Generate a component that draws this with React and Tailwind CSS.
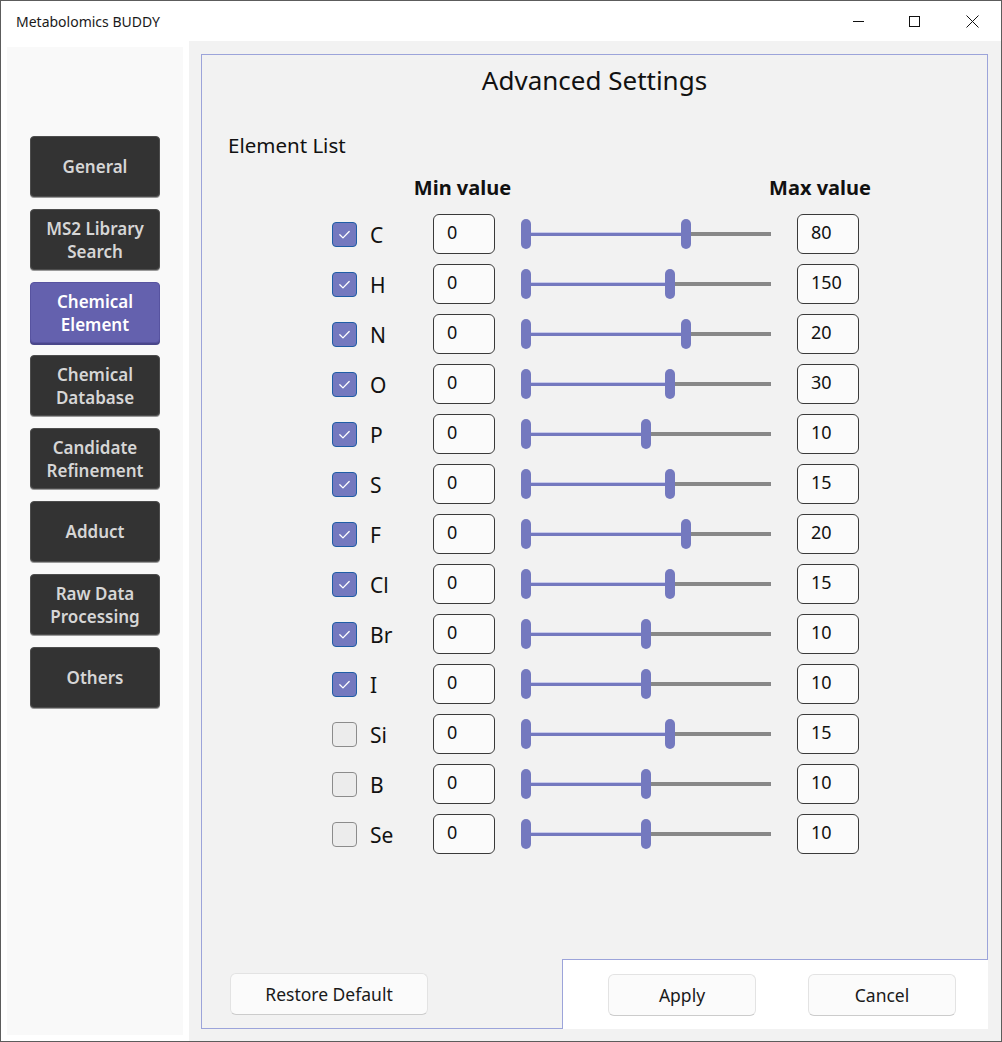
import React from 'react';

const NAV = [
  { label: ['General'] },
  { label: ['MS2 Library', 'Search'] },
  { label: ['Chemical', 'Element'], active: true },
  { label: ['Chemical', 'Database'] },
  { label: ['Candidate', 'Refinement'] },
  { label: ['Adduct'] },
  { label: ['Raw Data', 'Processing'] },
  { label: ['Others'] },
];

// pos = right thumb centre, px from track start
const ELEMENTS = [
  { sym: 'C', on: true, max: '80', pos: 165 },
  { sym: 'H', on: true, max: '150', pos: 149 },
  { sym: 'N', on: true, max: '20', pos: 165 },
  { sym: 'O', on: true, max: '30', pos: 149 },
  { sym: 'P', on: true, max: '10', pos: 125 },
  { sym: 'S', on: true, max: '15', pos: 149 },
  { sym: 'F', on: true, max: '20', pos: 165 },
  { sym: 'Cl', on: true, max: '15', pos: 149 },
  { sym: 'Br', on: true, max: '10', pos: 125 },
  { sym: 'I', on: true, max: '10', pos: 125 },
  { sym: 'Si', on: false, max: '15', pos: 149 },
  { sym: 'B', on: false, max: '10', pos: 125 },
  { sym: 'Se', on: false, max: '10', pos: 125 },
];

const NavButton = ({ label, active }) => (
  <div
    className={`w-[130px] h-[61px] rounded-[4px] flex flex-col items-center justify-center text-[17px] font-semibold leading-[23px] ${
      active
        ? 'bg-[#6461ae] text-white border border-[#5753a0] shadow-[0_2px_0_#4a478a]'
        : 'bg-[#333333] text-[#d6d6d6] border border-[#4d4d4d] shadow-[0_1px_0_#9a9a9a]'
    }`}
  >
    {label.map((l) => (
      <span key={l}>{l}</span>
    ))}
  </div>
);

const Checkbox = ({ on }) =>
  on ? (
    <div className="w-[25px] h-[25px] shrink-0 rounded-[4px] bg-[#7479bf] border border-[#1f5ea6] flex items-center justify-center">
      <svg width="15" height="15" viewBox="0 0 16 16" fill="none">
        <path d="M3 8.3 L6.4 11.6 L13 4.8" stroke="white" strokeWidth="1.4" strokeLinecap="round" strokeLinejoin="round" />
      </svg>
    </div>
  ) : (
    <div className="w-[25px] h-[25px] shrink-0 rounded-[4px] bg-[#ececec] border border-[#8c8c8c]" />
  );

const NumBox = ({ value }) => (
  <div className="w-[62px] h-[40px] shrink-0 rounded-[6px] border border-[#3a3a3a] bg-[#fbfbfb] pl-[13px] pb-[3px] flex items-center text-[18px] text-[#111]">
    {value}
  </div>
);

const Slider = ({ pos }) => (
  <div className="relative w-[250px] h-[40px]">
    <div className="absolute left-[5px] right-0 top-[18px] h-[4px] bg-[#888888]" />
    <div
      className="absolute left-[5px] top-[18px] h-[4px] bg-[#7479bf] border-t border-[#c9cbea]"
      style={{ width: pos - 5 }}
    />
    <div className="absolute left-0 top-[5px] w-[10px] h-[30px] rounded-full bg-[#7479bf]" />
    <div
      className="absolute top-[5px] w-[10px] h-[30px] rounded-full bg-[#7479bf]"
      style={{ left: pos - 5 }}
    />
  </div>
);

const DialogButton = ({ children, className }) => (
  <div
    className={`h-[42px] rounded-[6px] bg-[#fbfbfb] border border-[#e3e3e3] border-b-[#cccccc] flex items-center justify-center text-[17.5px] text-[#1a1a1a] ${className}`}
  >
    {children}
  </div>
);

export default function App() {
  return (
    <div
      className="w-[1002px] h-[1042px] flex flex-col bg-white border border-[#5c5c5c] overflow-hidden"
      style={{ fontFamily: '"Noto Sans", "Open Sans", sans-serif' }}
    >
      {/* title bar */}
      <div className="h-[40px] shrink-0 flex items-center bg-white">
        <div className="pl-[15px] text-[14px] text-[#1a1a1a]">Metabolomics BUDDY</div>
        <div className="ml-auto flex items-center h-full">
          <div className="w-[54px] h-full flex items-center justify-center">
            <div className="w-[11px] h-[1px] bg-[#111]" />
          </div>
          <div className="w-[58px] h-full flex items-center justify-center">
            <div className="w-[11px] h-[11px] border border-[#111]" />
          </div>
          <div className="w-[58px] h-full flex items-center justify-center">
            <svg width="13" height="13" viewBox="0 0 13 13">
              <path d="M0.5 0.5 L12.5 12.5 M12.5 0.5 L0.5 12.5" stroke="#111" strokeWidth="1" />
            </svg>
          </div>
        </div>
      </div>

      <div className="flex-1 flex min-h-0">
        {/* sidebar */}
        <div className="w-[188px] shrink-0 bg-white pl-[6px] pr-[6px] pt-[6px] pb-[6px]">
          <div className="h-full bg-[#f9f9f9] pt-[89px] pl-[23px] flex flex-col gap-[12px]">
            {NAV.map((n) => (
              <NavButton key={n.label.join(' ')} label={n.label} active={n.active} />
            ))}
          </div>
        </div>

        {/* content */}
        <div className="flex-1 bg-[#f2f2f2] pl-[12px] pr-[13px] pt-[13px] pb-[12px] flex">
          <div className="w-[787px] flex flex-col">
            <div className="flex-1 border-t border-l border-r border-[#9ca4da] flex flex-col">
              <div className="h-[50px] leading-[50px] text-center text-[26px] text-[#111]">
                Advanced Settings
              </div>
              <div className="mt-[25px] pl-[26px] h-[30px] leading-[30px] text-[20.5px] text-[#111]">
                Element List
              </div>
              <div className="mt-[13px] h-[30px] leading-[30px] flex text-[20px] font-bold text-[#111]">
                <div className="ml-[201px] w-[119px] text-center">Min value</div>
                <div className="ml-[238px] w-[120px] text-center">Max value</div>
              </div>
              <div className="mt-[6px] pl-[130px] flex flex-col">
                {ELEMENTS.map((el) => (
                  <div key={el.sym} className="h-[50px] flex items-center">
                    <Checkbox on={el.on} />
                    <div className="w-[76px] shrink-0 pl-[13px] pt-[3px] text-[21px] text-[#111]">{el.sym}</div>
                    <NumBox value="0" />
                    <div className="ml-[26px]">
                      <Slider pos={el.pos} />
                    </div>
                    <div className="ml-[26px]">
                      <NumBox value={el.max} />
                    </div>
                  </div>
                ))}
              </div>
            </div>
            <div className="h-[70px] shrink-0 flex">
              <div className="w-[361px] border-l border-b border-[#9ca4da] pl-[28px] pt-[14px]">
                <DialogButton className="w-[198px]">Restore Default</DialogButton>
              </div>
              <div className="flex-1 bg-white border-t border-l border-[#9ca4da] pl-[45px] pt-[14px] flex gap-[52px]">
                <DialogButton className="w-[148px]">Apply</DialogButton>
                <DialogButton className="w-[148px]">Cancel</DialogButton>
              </div>
            </div>
          </div>
        </div>
      </div>
    </div>
  );
}
